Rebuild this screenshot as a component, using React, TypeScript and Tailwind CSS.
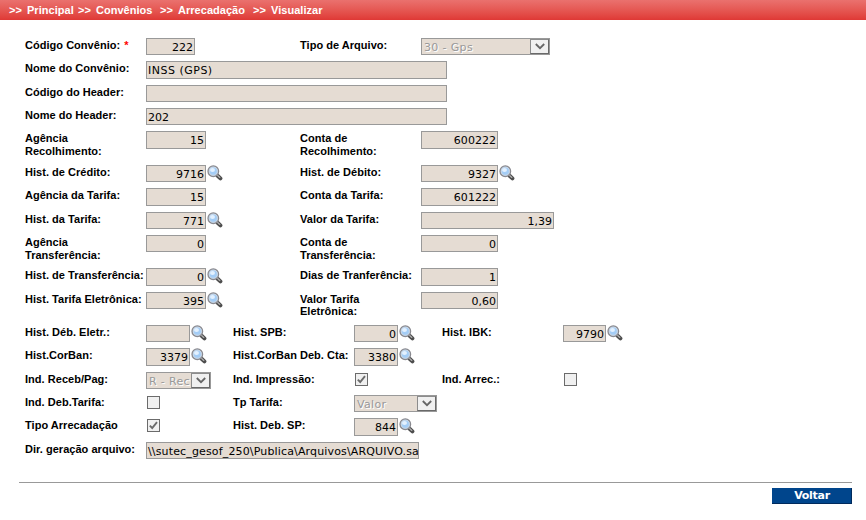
import type { ReactNode } from "react";

function Magnifier() {
  return (
    <svg width="16" height="16" viewBox="0 0 16 16" className="ml-px shrink-0">
      <path d="M10.6 10.8 L13.4 13.4" stroke="#4d4d4d" strokeWidth="4" strokeLinecap="round" />
      <path d="M9.8 9.8 L12.8 12.4" stroke="#b0b0b0" strokeWidth="1.3" strokeLinecap="round" />
      <circle cx="6.3" cy="6.2" r="5.2" fill="#a4cdf6" stroke="#8a8a90" strokeWidth="1.5" />
      <circle cx="6.3" cy="6.2" r="4.1" fill="none" stroke="#d3dbe5" strokeWidth="0.9" />
      <ellipse cx="5.5" cy="5" rx="2.5" ry="2.1" fill="#e3f1ff" />
    </svg>
  );
}

function Chevron() {
  return (
    <svg width="10" height="7" viewBox="0 0 10 7">
      <path d="M0.8 1 L5 5.2 L9.2 1" fill="none" stroke="#666666" strokeWidth="1.8" />
    </svg>
  );
}

type FieldProps = { w: string; value?: string; left?: boolean; search?: boolean; tall?: boolean; tracking?: string };

function Field({ w, value = "", left, search, tall, tracking = "" }: FieldProps) {
  return (
    <div className="flex items-start">
      <div
        className={`${w} ${tracking} ${tall ? "h-[18px]" : "h-[17px]"} ${left ? "justify-start" : "justify-end"} flex shrink-0 items-start overflow-hidden border border-[#999999] bg-[#e5dcd3] px-px pt-px font-['DejaVu_Sans',sans-serif] text-[11px] leading-[15px] font-normal whitespace-nowrap text-black`}
      >
        {value}
      </div>
      {search && <Magnifier />}
    </div>
  );
}

function Select({ w, value }: { w: string; value: string }) {
  return (
    <div className={`${w} flex h-[17px] border border-[#999999] bg-[#e5dcd3]`}>
      <div className="min-w-0 grow pt-px pl-0.5 font-['DejaVu_Sans',sans-serif] text-[11px] leading-[15px] font-normal tracking-[0.35px] whitespace-nowrap text-[#999999] [text-shadow:1px_1px_0_#fff]">
        {value}
      </div>
      <div className="flex h-[15px] w-[19px] shrink-0 items-center justify-center border border-t-[#8c8c8c] border-r-[#696969] border-b-[#696969] border-l-[#8c8c8c] bg-[#f0f0f0]">
        <Chevron />
      </div>
    </div>
  );
}

function Check({ on }: { on?: boolean }) {
  return (
    <div className="mt-px ml-px flex h-[13px] w-[13px] items-center justify-center border border-[#6b6b6b] bg-[#f0f0f0]">
      {on && (
        <svg width="9" height="9" viewBox="0 0 9 9">
          <path d="M0.8 4.6 L3.2 7 L8 1.2" fill="none" stroke="#6b6b6b" strokeWidth="1.9" />
        </svg>
      )}
    </div>
  );
}

function Crumb({ w, children }: { w: string; children: ReactNode }) {
  return (
    <span className={`${w} flex shrink-0`}>
      <span className="w-[18px]">&gt;&gt;</span>
      {children}
    </span>
  );
}

type Cell = { label: ReactNode; field: ReactNode };

function Row({ h, cells, wide }: { h: string; cells: Cell[]; wide?: boolean }) {
  return (
    <div className={`${h} flex items-start`}>
      {cells.map((c, i) => (
        <div
          key={i}
          className={`flex shrink-0 items-start ${wide ? (i === 0 ? "w-[208px]" : "w-[209px]") : "w-[275px]"}`}
        >
          <div className="w-[121px] shrink-0 pt-px whitespace-nowrap">{c.label}</div>
          {c.field}
        </div>
      ))}
    </div>
  );
}

export default function App() {
  return (
    <div className="h-[520px] w-[866px] overflow-hidden bg-white font-['Liberation_Sans',Arial,sans-serif] text-[11px] leading-[13px] font-bold tracking-[0.03px] text-black">
      <header className="flex h-5 items-center bg-linear-to-b from-[#ea716e] to-[#df3835] pl-[9px] whitespace-nowrap text-white">
        <Crumb w="w-[69px]">Principal</Crumb>
        <Crumb w="w-[82px]">Convênios</Crumb>
        <Crumb w="w-[93px]">Arrecadação</Crumb>
        <Crumb w="w-[80px]">Visualizar</Crumb>
      </header>

      <main className="pt-[18px] pl-[25px]">
        <Row
          h="h-[23px]"
          cells={[
            {
              label: (
                <>
                  Código Convênio: <span className="ml-px text-[#ff0000]">*</span>
                </>
              ),
              field: <Field w="w-[49px]" value="222" />,
            },
            { label: "Tipo de Arquivo:", field: <Select w="w-[129px]" value="30 - Gps" /> },
          ]}
        />
        <Row
          h="h-[24px]"
          cells={[
            {
              label: "Nome do Convênio:",
              field: <Field w="w-[301px]" value="INSS (GPS)" left tall tracking="tracking-[0.5px]" />,
            },
          ]}
        />
        <Row h="h-[23px]" cells={[{ label: "Código do Header:", field: <Field w="w-[301px]" left /> }]} />
        <Row h="h-[23px]" cells={[{ label: "Nome do Header:", field: <Field w="w-[301px]" value="202" left /> }]} />
        <Row
          h="h-[34px]"
          cells={[
            { label: <>Agência<br />Recolhimento:</>, field: <Field w="w-[60px]" value="15" tall /> },
            { label: <>Conta de<br />Recolhimento:</>, field: <Field w="w-[77px]" value="600222" tall /> },
          ]}
        />
        <Row
          h="h-[23px]"
          cells={[
            { label: "Hist. de Crédito:", field: <Field w="w-[60px]" value="9716" search /> },
            { label: "Hist. de Débito:", field: <Field w="w-[77px]" value="9327" search /> },
          ]}
        />
        <Row
          h="h-[24px]"
          cells={[
            { label: "Agência da Tarifa:", field: <Field w="w-[60px]" value="15" tall /> },
            { label: "Conta da Tarifa:", field: <Field w="w-[77px]" value="601222" tall /> },
          ]}
        />
        <Row
          h="h-[23px]"
          cells={[
            { label: "Hist. da Tarifa:", field: <Field w="w-[60px]" value="771" search /> },
            { label: "Valor da Tarifa:", field: <Field w="w-[133px]" value="1,39" /> },
          ]}
        />
        <Row
          h="h-[33px]"
          cells={[
            { label: <>Agência<br />Transferência:</>, field: <Field w="w-[60px]" value="0" /> },
            { label: <>Conta de<br />Transferência:</>, field: <Field w="w-[77px]" value="0" /> },
          ]}
        />
        <Row
          h="h-[24px]"
          cells={[
            { label: "Hist. de Transferência:", field: <Field w="w-[60px]" value="0" tall search /> },
            { label: "Dias de Tranferência:", field: <Field w="w-[77px]" value="1" tall /> },
          ]}
        />
        <Row
          h="h-[33px]"
          cells={[
            { label: "Hist. Tarifa Eletrônica:", field: <Field w="w-[60px]" value="395" search /> },
            { label: <div className="leading-[12px]">Valor Tarifa<br />Eletrônica:</div>, field: <Field w="w-[77px]" value="0,60" /> },
          ]}
        />
        <Row
          wide
          h="h-[23px]"
          cells={[
            { label: "Hist. Déb. Eletr.:", field: <Field w="w-[44px]" search /> },
            { label: "Hist. SPB:", field: <Field w="w-[44px]" value="0" search /> },
            { label: "Hist. IBK:", field: <Field w="w-[43px]" value="9790" search /> },
          ]}
        />
        <Row
          wide
          h="h-[24px]"
          cells={[
            { label: "Hist.CorBan:", field: <Field w="w-[44px]" value="3379" tall search /> },
            { label: "Hist.CorBan Deb. Cta:", field: <Field w="w-[44px]" value="3380" tall search /> },
          ]}
        />
        <Row
          wide
          h="h-[23px]"
          cells={[
            { label: "Ind. Receb/Pag:", field: <Select w="w-[65px]" value="R - Rec" /> },
            { label: "Ind. Impressão:", field: <Check on /> },
            { label: "Ind. Arrec.:", field: <Check /> },
          ]}
        />
        <Row
          wide
          h="h-[23px]"
          cells={[
            { label: "Ind. Deb.Tarifa:", field: <Check /> },
            { label: "Tp Tarifa:", field: <Select w="w-[83px]" value="Valor" /> },
          ]}
        />
        <Row
          wide
          h="h-[24px]"
          cells={[
            { label: "Tipo Arrecadação", field: <Check on /> },
            { label: "Hist. Deb. SP:", field: <Field w="w-[44px]" value="844" tall search /> },
          ]}
        />
        <Row
          h="h-[17px]"
          cells={[
            {
              label: "Dir. geração arquivo:",
              field: (
                <Field
                  w="w-[273px]"
                  value="\\sutec_gesof_250\Publica\Arquivos\ARQUIVO.sa"
                  left
                  tracking="tracking-[0.15px]"
                />
              ),
            },
          ]}
        />
      </main>

      <footer className="mt-[23px] mr-[14px] ml-[19px] flex justify-end border-t border-[#999999] pt-[5px]">
        <button className="h-4 w-20 border-r border-b border-[#002a5c] bg-[#00458c] pl-px font-['DejaVu_Sans',sans-serif] text-[11px] leading-[15px] font-bold tracking-[-0.3px] text-white">
          Voltar
        </button>
      </footer>
    </div>
  );
}
